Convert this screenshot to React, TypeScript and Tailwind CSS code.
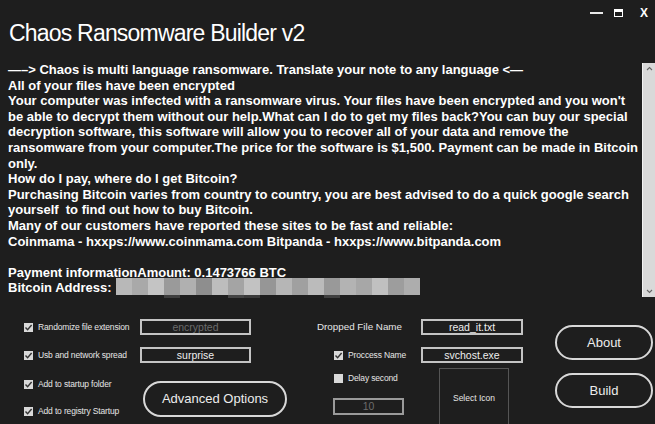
import React from "react";

const lines: string[] = [
  "\u2014\u2013> Chaos is multi language ransomware. Translate your note to any language <\u2014",
  "All of your files have been encrypted",
  "Your computer was infected with a ransomware virus. Your files have been encrypted and you won't",
  "be able to decrypt them without our help.What can I do to get my files back?You can buy our special",
  "decryption software, this software will allow you to recover all of your data and remove the",
  "ransomware from your computer.The price for the software is $1,500. Payment can be made in Bitcoin",
  "only.",
  "How do I pay, where do I get Bitcoin?",
  "Purchasing Bitcoin varies from country to country, you are best advised to do a quick google search",
  "yourself  to find out how to buy Bitcoin.",
  "Many of our customers have reported these sites to be fast and reliable:",
  "Coinmama - hxxps://www.coinmama.com Bitpanda - hxxps://www.bitpanda.com",
  "\u00a0",
  "Payment informationAmount: 0.1473766 BTC",
];

const blurTop = ["#b8b8b8", "#a9a9a9", "#c4c4c4", "#9a9a9a", "#b0b0b0", "#8e8e8e", "#bdbdbd", "#a4a4a4", "#c2c2c2", "#969696", "#b6b6b6", "#a0a0a0", "#bbbbbb", "#999999", "#b3b3b3", "#a7a7a7", "#c0c0c0", "#9d9d9d", "#adadad"];
const blurBottom = ["transparent", "transparent", "transparent", "#3e3e3e", "transparent", "transparent", "transparent", "#444", "#3a3a3a", "transparent", "transparent", "transparent", "transparent", "#404040", "transparent", "transparent", "transparent", "transparent", "transparent"];

function Check({ checked = true }: { checked?: boolean }) {
  return (
    <div className="w-[9px] h-[9px] bg-[#d9d9d9] flex items-center justify-center shrink-0">
      {checked && (
        <svg width="9" height="9" viewBox="0 0 9 9">
          <path d="M1.5 4.5 L3.6 6.7 L7.6 2" fill="none" stroke="#333" strokeWidth="1.4" />
        </svg>
      )}
    </div>
  );
}

function CheckLabel({ label, checked = true, w }: { label: string; checked?: boolean; w: string }) {
  return (
    <div className={`flex items-center gap-[5px] h-[12px] ${w}`}>
      <Check checked={checked} />
      <span className="text-[8.5px] tracking-[-0.15px] text-[#e6e6e6] leading-none whitespace-nowrap">{label}</span>
    </div>
  );
}

function Box({ text, w, h, color }: { text: string; w: string; h: string; color: string }) {
  return (
    <div className={`${w} ${h} border-2 border-[#c4c4c4] flex items-center justify-center text-[10.5px] leading-none ${color}`}>
      {text}
    </div>
  );
}

function Pill({ text, w, h }: { text: string; w: string; h: string }) {
  return (
    <div className={`${w} ${h} border-2 border-[#d8d8d8] rounded-[18px] flex items-center justify-center text-[13px] text-[#ededed]`}>
      {text}
    </div>
  );
}

export default function App() {
  return (
    <div className="w-[655px] h-[424px] bg-[#1e1e1e] overflow-hidden text-white font-['Liberation_Sans',Arial,sans-serif] flex flex-col">
      {/* header */}
      <div className="h-[62px] flex justify-between shrink-0">
        <div className="pl-[9px] pt-[22px] text-[23px] leading-none tracking-[-0.8px] whitespace-nowrap">
          Chaos Ransomware Builder v2
        </div>
        <div className="flex items-center h-[26px] pr-[7px]">
          <div className="w-[13px] h-[2px] bg-[#e8e8e8]" />
          <div className="ml-[11px] w-[9px] h-[8px] border border-white border-t-[3px]" />
          <div className="ml-[17px] text-[12px] font-bold leading-none">X</div>
        </div>
      </div>

      {/* text area */}
      <div className="h-[236px] flex shrink-0">
        <div className="flex-1 pl-[8px] text-[13px] font-bold leading-[15.6px] whitespace-pre overflow-hidden">
          {lines.map((l, i) => (
            <div key={i}>{l}</div>
          ))}
          <div className="flex items-start">
            <span>Bitcoin Address: </span>
            <div className="ml-[1px] -mt-[2px] flex flex-col">
              <div className="flex h-[17px]">
                {blurTop.map((c, i) => (
                  <div key={i} className="w-[16px] h-full" style={{ background: c }} />
                ))}
              </div>
              <div className="flex h-[6px]">
                {blurBottom.map((c, i) => (
                  <div key={i} className="w-[16px] h-full" style={{ background: c }} />
                ))}
              </div>
            </div>
          </div>
        </div>
        <div className="w-[13px] mt-[1px] h-[234px] bg-[#d9d9d9] border-l border-[#f2f2f2] flex flex-col justify-between items-center py-[3px]">
          <svg width="7" height="5" viewBox="0 0 7 5">
            <path d="M1 4 L3.5 1.5 L6 4" fill="none" stroke="#666" strokeWidth="1.1" />
          </svg>
          <svg width="7" height="5" viewBox="0 0 7 5">
            <path d="M1 1 L3.5 3.5 L6 1" fill="none" stroke="#666" strokeWidth="1.1" />
          </svg>
        </div>
      </div>

      {/* bottom controls */}
      <div className="flex-1 flex pl-[24px] pt-[21px]">
        {/* left */}
        <div className="flex flex-col w-[263px]">
          <div className="flex items-center h-[16px]">
            <CheckLabel label="Randomize file extension" w="w-[116px]" />
            <Box text="encrypted" w="w-[111px]" h="h-[16px]" color="text-[#6c6c6c]" />
          </div>
          <div className="flex items-center h-[16px] mt-[12px]">
            <CheckLabel label="Usb and network spread" w="w-[116px]" />
            <Box text="surprise" w="w-[111px]" h="h-[16px]" color="text-[#eeeeee]" />
          </div>
          <div className="flex items-start mt-[15px]">
            <div className="flex flex-col w-[119px] gap-[15px]">
              <CheckLabel label="Add to startup folder" w="w-full" />
              <CheckLabel label="Add to registry Startup" w="w-full" />
            </div>
            <div className="mt-[3px]">
              <Pill text="Advanced Options" w="w-[144px]" h="h-[36px]" />
            </div>
          </div>
        </div>

        {/* middle */}
        <div className="flex flex-col ml-[30px] w-[206px]">
          <div className="flex items-center h-[16px]">
            <div className="w-[104px] text-[9.8px] leading-none text-[#e6e6e6] whitespace-nowrap">Dropped File Name</div>
            <Box text="read_it.txt" w="w-[102px]" h="h-[16px]" color="text-[#eeeeee]" />
          </div>
          <div className="flex items-center h-[16px] mt-[12px] pl-[17px]">
            <CheckLabel label="Proccess Name" w="w-[87px]" />
            <Box text="svchost.exe" w="w-[102px]" h="h-[16px]" color="text-[#eeeeee]" />
          </div>
          <div className="flex items-start mt-[5px]">
            <div className="flex flex-col w-[122px] pl-[16px]">
              <div className="mt-[4px] pl-[1px]">
                <CheckLabel label="Delay second" checked={false} w="w-full" />
              </div>
              <div className="mt-[14px] w-[71px] h-[17px] border-2 border-[#9a9a9a] flex items-center justify-center text-[10.5px] leading-none text-[#6c6c6c]">
                10
              </div>
            </div>
            <div className="w-[70px] h-[60px] border border-[#555555] flex items-center justify-center text-[8.5px] text-[#e6e6e6]">
              Select Icon
            </div>
          </div>
        </div>

        {/* right */}
        <div className="flex flex-col ml-[32px] mt-[6px] gap-[13px]">
          <Pill text="About" w="w-[98px]" h="h-[35px]" />
          <Pill text="Build" w="w-[98px]" h="h-[35px]" />
        </div>
      </div>
    </div>
  );
}
